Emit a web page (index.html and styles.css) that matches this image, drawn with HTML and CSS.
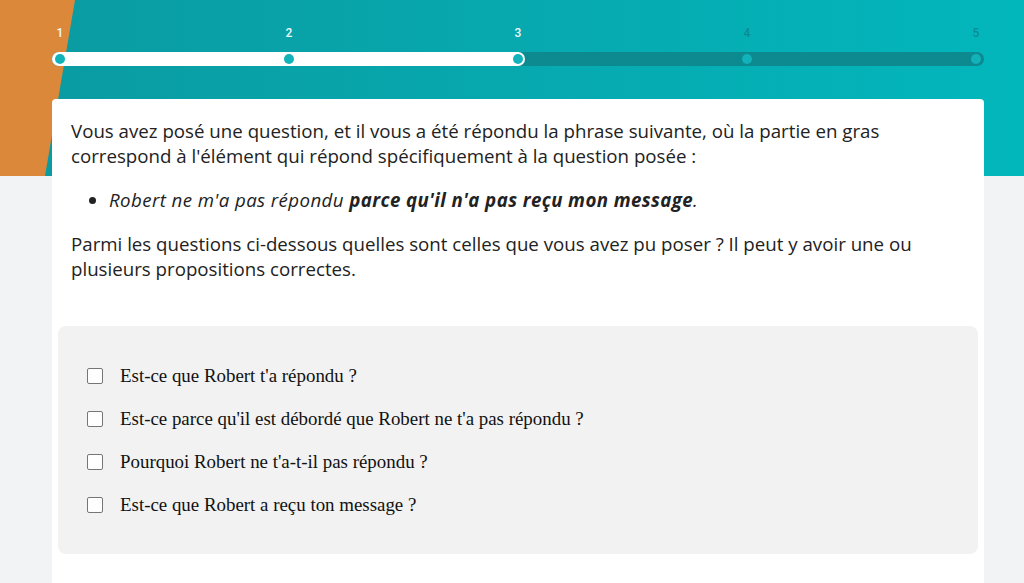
FILE: index.html
```html
<!DOCTYPE html>
<html lang="fr">
<head>
    <meta charset="UTF-8">
    <meta name="viewport" content="width=device-width, initial-scale=1.0">
    <title>Question 3</title>
    <link rel="stylesheet" href="styles.css">
</head>
<body>
    <header class="hero">
        <div class="progress">
            <div class="steps">
                <span class="step done">1</span>
                <span class="step done">2</span>
                <span class="step done">3</span>
                <span class="step">4</span>
                <span class="step">5</span>
            </div>
            <div class="track">
                <div class="fill"></div>
                <div class="dots">
                    <span class="dot"></span>
                    <span class="dot"></span>
                    <span class="dot"></span>
                    <span class="dot"></span>
                    <span class="dot"></span>
                </div>
            </div>
        </div>
    </header>

    <main class="card">
        <div class="prompt">
            <p>Vous avez posé une question, et il vous a été répondu la phrase suivante, où la partie en gras correspond à l'élément qui répond spécifiquement à la question posée :</p>
            <ul>
                <li><em>Robert ne m'a pas répondu <strong>parce qu'il n'a pas reçu mon message</strong>.</em></li>
            </ul>
            <p>Parmi les questions ci-dessous quelles sont celles que vous avez pu poser ? Il peut y avoir une ou plusieurs propositions correctes.</p>
        </div>

        <form class="choices">
            <label class="choice"><input type="checkbox"> Est-ce que Robert t'a répondu ?</label>
            <label class="choice"><input type="checkbox"> Est-ce parce qu'il est débordé que Robert ne t'a pas répondu ?</label>
            <label class="choice"><input type="checkbox"> Pourquoi Robert ne t'a-t-il pas répondu ?</label>
            <label class="choice"><input type="checkbox"> Est-ce que Robert a reçu ton message ?</label>
        </form>
    </main>
</body>
</html>
```

FILE: styles.css
```css
* {
    margin: 0;
    padding: 0;
    box-sizing: border-box;
}

html, body {
    height: 100%;
    overflow: hidden;
}

body {
    background: #f2f3f5;
    font-family: "Open Sans", "Liberation Sans", sans-serif;
    color: #222;
}

.hero {
    position: relative;
    height: 176px;
    padding: 26px 0 0 52px;
    background: linear-gradient(90deg, #0b9aa1, #02b7bc);
}

/* orange wedge on the left */
.hero::before {
    content: "";
    position: absolute;
    top: 0;
    left: 0;
    width: 76px;
    height: 176px;
    background: #dc883a;
    clip-path: polygon(0 0, 75px 0, 45px 176px, 0 176px);
}

.progress {
    position: relative;
    width: 932px;
}

.steps {
    display: flex;
    justify-content: space-between;
    padding: 0 3px;
    height: 26px;
}

.step {
    width: 10px;
    text-align: center;
    font-family: Roboto, "Liberation Sans", sans-serif;
    font-size: 12px;
    font-weight: 500;
    line-height: 14px;
    color: #0a8c93;
}

.step.done {
    color: #eefafa;
}

.track {
    display: grid;
    height: 14px;
    border-radius: 7px;
    background: #0c8a90;
}

.fill,
.dots {
    grid-area: 1 / 1;
}

.fill {
    width: 473px;
    border-radius: 7px;
    background: #fff;
}

.dots {
    display: flex;
    justify-content: space-between;
    align-items: center;
    padding: 0 3px;
}

.dot {
    width: 10px;
    height: 10px;
    border-radius: 50%;
    background: #12b2ba;
}

.card {
    position: relative;
    width: 932px;
    margin: -77px 0 0 52px;
    min-height: 500px;
    padding: 19px 6px;
    background: #fff;
    border-radius: 4px 4px 0 0;
}

.prompt {
    padding: 0 13px;
    font-size: 18.7px;
    line-height: 25px;
}

.prompt p,
.prompt ul {
    margin-bottom: 19px;
}

.prompt ul {
    padding-left: 38px;
}

.prompt em {
    letter-spacing: 0.4px;
}

.choices {
    display: flex;
    flex-direction: column;
    margin-top: 45px;
    padding: 28px 29px;
    background: #f2f2f2;
    border-radius: 8px;
}

.choice {
    display: flex;
    align-items: center;
    gap: 17px;
    height: 43px;
    font-family: "Liberation Serif", serif;
    font-size: 18.9px;
    color: #111;
}

.choice input {
    appearance: none;
    width: 16px;
    height: 16px;
    border: 1.5px solid #767676;
    border-radius: 2px;
    background: #fff;
}
```
